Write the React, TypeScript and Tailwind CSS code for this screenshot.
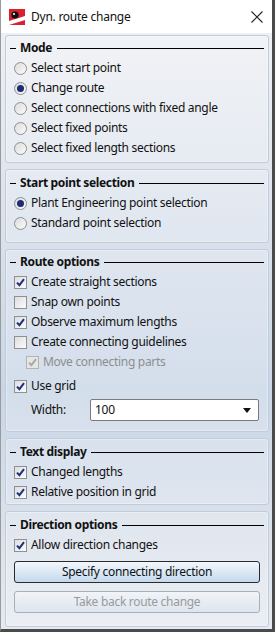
import React from "react";

const font = { fontFamily: '"Noto Sans", "Open Sans", sans-serif' };

function Radio({ checked, label }: { checked?: boolean; label: string }) {
  return (
    <div className="flex items-center h-[20px] pl-[8px]">
      <span className="w-[13px] h-[13px] rounded-full border border-[#8f9091] bg-gradient-to-br from-[#dcdcdc] to-[#fbfbfb] flex items-center justify-center shrink-0">
        {checked && <span className="w-[7px] h-[7px] rounded-full bg-[#1b2b74]" />}
      </span>
      <span className="ml-[4px] text-[12px] tracking-[-0.3px] text-[#111]">{label}</span>
    </div>
  );
}

function Check({ checked, label, disabled, indent }: { checked?: boolean; label: string; disabled?: boolean; indent?: boolean }) {
  return (
    <div className={`flex items-center h-[20px] ${indent ? "pl-[20px]" : "pl-[8px]"}`}>
      <span
        className={`w-[13px] h-[13px] border flex items-center justify-center shrink-0 ${
          disabled ? "border-[#b4b4b4] bg-[#e6e6e6]" : "border-[#8f9091] bg-gradient-to-br from-[#dedede] to-[#fbfbfb]"
        }`}
      >
        {checked && (
          <svg width="9" height="9" viewBox="0 0 9 9">
            <path
              d="M1 4.6 L3.4 7.2 L8 1.2"
              fill="none"
              stroke={disabled ? "#a9a9a9" : "#1d2f7e"}
              strokeWidth="2"
            />
          </svg>
        )}
      </span>
      <span className={`ml-[4px] text-[12px] tracking-[-0.3px] ${disabled ? "text-[#8e8e8e]" : "text-[#111]"}`}>{label}</span>
    </div>
  );
}

function Header({ title }: { title: string }) {
  return (
    <div className="flex items-center h-[16px] pl-[4px] pr-[4px]">
      <span className="w-[6px] h-px bg-black shrink-0" />
      <span className="ml-[4px] text-[12px] tracking-[-0.35px] font-bold text-[#111] leading-none">{title}</span>
      <span className="flex-1 h-px bg-black ml-[5px]" />
    </div>
  );
}

function Panel({ className, children }: { className: string; children: React.ReactNode }) {
  return (
    <div className={`rounded-[3px] border border-[#c2ccd9] bg-white/20 shadow-[inset_0_0_0_1px_rgba(255,255,255,0.35)] flex flex-col ${className}`}>
      {children}
    </div>
  );
}

export default function App() {
  return (
    <div style={font} className="w-[275px] h-[632px] flex flex-col border-l border-[#9a9a9a] border-r-[3px] border-r-[#4a4a4a] border-b-[3px] border-b-[#4a4a4a] bg-white overflow-hidden">
      <div className="h-[33px] bg-white flex items-center shrink-0">
        <svg width="16" height="16" viewBox="0 0 16 16" className="ml-[8px]">
          <rect x="0" y="0" width="16" height="16" fill="#d8232e" />
          <path d="M0 16 L0 12 L16 7 L16 11 Z" fill="#ffffff" />
          <circle cx="6" cy="6" r="3.6" fill="#111" />
          <circle cx="5" cy="5" r="1.1" fill="#ffffff" />
        </svg>
        <span className="ml-[6px] text-[12px] tracking-[-0.25px] text-[#111]">Dyn. route change</span>
        <svg width="12" height="12" viewBox="0 0 12 12" className="ml-auto mr-[9px]">
          <path d="M0.5 0.5 L11.5 11.5 M11.5 0.5 L0.5 11.5" stroke="#222" strokeWidth="1.1" />
        </svg>
      </div>
      <div className="flex-1 flex flex-col pt-[2px] pl-[4px] pr-[3px] bg-gradient-to-b from-[#eef0f4] via-[#c9d6e7] via-60% to-[#e6eaf0]">
        <Panel className="h-[128px] pt-[4px]">
          <Header title="Mode" />
          <div className="mt-[2px]">
            <Radio label="Select start point" />
            <Radio checked label="Change route" />
            <Radio label="Select connections with fixed angle" />
            <Radio label="Select fixed points" />
            <Radio label="Select fixed length sections" />
          </div>
        </Panel>
        <Panel className="h-[74px] mt-[6px] pt-[5px]">
          <Header title="Start point selection" />
          <div className="mt-[2px]">
            <Radio checked label="Plant Engineering point selection" />
            <Radio label="Standard point selection" />
          </div>
        </Panel>
        <Panel className="h-[183px] mt-[6px] pt-[4px]">
          <Header title="Route options" />
          <div className="mt-[2px]">
            <Check checked label="Create straight sections" />
            <Check label="Snap own points" />
            <Check checked label="Observe maximum lengths" />
            <Check label="Create connecting guidelines" />
            <Check checked disabled indent label="Move connecting parts" />
            <div className="mt-[4px]">
              <Check checked label="Use grid" />
            </div>
            <div className="flex items-center mt-[3px] pl-[25px]">
              <span className="text-[12px] tracking-[-0.3px] text-[#111] w-[59px]">Width:</span>
              <div className="w-[169px] h-[22px] bg-white border border-[#7a7a7a] rounded-[2px] flex items-center pl-[4px] pr-[7px]">
                <span className="text-[12px] tracking-[-0.3px] text-[#111]">100</span>
                <svg width="8" height="5" viewBox="0 0 8 5" className="ml-auto">
                  <path d="M0 0 L8 0 L4 5 Z" fill="#111" />
                </svg>
              </div>
            </div>
          </div>
        </Panel>
        <Panel className="h-[67px] mt-[6px] pt-[5px]">
          <Header title="Text display" />
          <div className="mt-[2px]">
            <Check checked label="Changed lengths" />
            <Check checked label="Relative position in grid" />
          </div>
        </Panel>
        <Panel className="h-[116px] mt-[6px] pt-[5px]">
          <Header title="Direction options" />
          <div className="mt-[2px]">
            <Check checked label="Allow direction changes" />
          </div>
          <div className="mt-[6px] mx-[8px] h-[22px] rounded-[3px] border border-[#2b2b2b] bg-gradient-to-b from-[#f2f7fc] to-[#c4d9ee] flex items-center justify-center text-[12px] tracking-[-0.3px] text-[#111]">
            Specify connecting direction
          </div>
          <div className="mt-[8px] mx-[8px] h-[22px] rounded-[3px] border border-[#a9afb5] bg-gradient-to-b from-[#f1f4f8] to-[#dde5ee] flex items-center justify-center text-[12px] tracking-[-0.3px] text-[#9a9a9a]">
            Take back route change
          </div>
        </Panel>
      </div>
    </div>
  );
}
